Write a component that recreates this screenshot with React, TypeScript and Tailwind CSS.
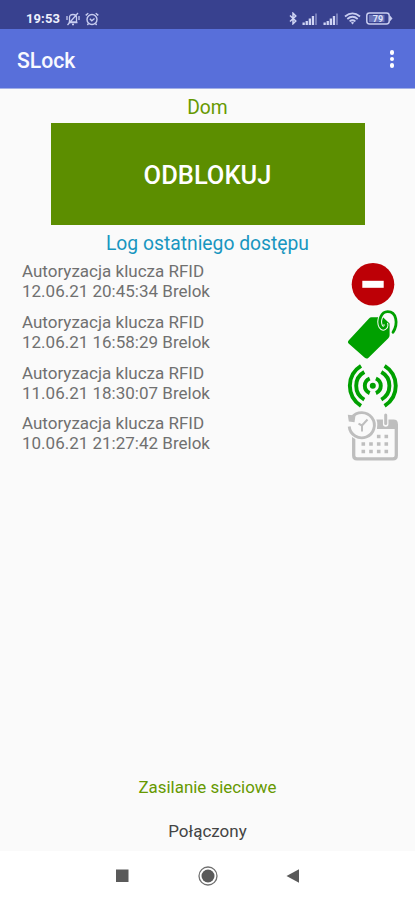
import React from 'react';

type LogEntry = {
  title: string;
  detail: string;
  icon: React.ReactNode;
};

function NoEntryIcon() {
  return (
    <svg className="h-[50px] w-[52px]" viewBox="0 0 52 50" aria-hidden="true">
      <circle cx="26" cy="25.3" r="21.3" fill="#bd0006" />
      <rect x="15.3" y="21.8" width="21.4" height="7" fill="#fff" />
    </svg>
  );
}

function TagIcon() {
  return (
    <svg className="h-[50px] w-[52px]" viewBox="0 0 52 50" aria-hidden="true">
      <path
        d="M24.500 7.300H36L42.600 13.500V25.300Q42.600 27 41.300 28.300L21.500 47.700Q19.700 49.400 17.800 47.800L1.900 33.700Q0 32 1.800 30.200L22 8.400Q23 7.300 24.500 7.300Z"
        fill="#00a000"
      />
      <path
        d="M38.700 13.500C40 17.500 36 20 33.800 16.500 31 11 34 1.700 40.700 1.700 49.500 1.700 51.500 13.500 46 22.300"
        fill="none"
        stroke="#fafafa"
        strokeWidth="4.800"
      />
      <path
        d="M38.700 13.500C40 17.500 36 20 33.800 16.500 31 11 34 1.700 40.700 1.700 49.500 1.700 51.500 13.500 46 22.300"
        fill="none"
        stroke="#00a000"
        strokeWidth="2.800"
        strokeLinecap="round"
      />
    </svg>
  );
}

function SignalIcon() {
  return (
    <svg className="h-[50px] w-[52px]" viewBox="0 0 52 50" aria-hidden="true">
      <circle cx="25.800" cy="24.800" r="3" fill="#00a000" />
      <g fill="none" stroke="#00a000" strokeWidth="3.900">
        <path d="M22.700 17.500A7.900 7.900 0 0 0 22.700 32.100M28.900 17.500A7.900 7.900 0 0 1 28.900 32.100" />
        <path d="M17.300 11A15.800 15.800 0 0 0 17.300 38.600M34.300 11A15.800 15.800 0 0 1 34.300 38.600" />
        <path d="M14 4.800A23.500 23.500 0 0 0 14 44.800M37.600 4.800A23.500 23.500 0 0 1 37.600 44.800" />
      </g>
    </svg>
  );
}

function ScheduleIcon() {
  return (
    <svg className="h-[50px] w-[52px]" viewBox="0 0 52 50" aria-hidden="true">
      <path
        d="M6.700 26V44.500Q6.700 47.800 10 47.800H46Q49.300 47.800 49.300 44.500V13"
        fill="none"
        stroke="#bebebe"
        strokeWidth="3.300"
      />
      <path d="M28 8.400H46.500Q50.900 8.400 50.900 12.700V18H30Z" fill="#bebebe" />
      <path d="M38.700 3V13" stroke="#fafafa" strokeWidth="5.500" strokeLinecap="round" />
      <path d="M38.700 4V12.500" stroke="#bebebe" strokeWidth="3" strokeLinecap="round" />
      <circle cx="14.700" cy="13.800" r="15.600" fill="#fafafa" />
      <path d="M4.800 6.500A12.600 12.600 0 1 1 2.200 15.500" fill="none" stroke="#bebebe" strokeWidth="2.900" />
      <path d="M.8 3.800 8.500 4.500 7.500 11.300 1.800 10.500Z" fill="#bebebe" />
      <path d="M20.500 8.500 15 14.500V20.500M11.500 12.700 15 14.500" fill="none" stroke="#bebebe" strokeWidth="2" />
      <g fill="#bebebe">
        <path d="M29.900 23.700h3.600v3.600h-3.600zM37.500 23.700h3.600v3.600h-3.600z" />
        <path d="M14.500 31.200h3.600v3.600h-3.600zM22.200 31.200h3.600v3.600h-3.600zM29.900 31.200h3.600v3.600h-3.600zM37.500 31.200h3.600v3.600h-3.600z" />
        <path d="M14.500 38.700h3.600v3.600h-3.600zM22.200 38.700h3.600v3.600h-3.600zM29.900 38.700h3.600v3.600h-3.600zM37.500 38.700h3.600v3.600h-3.600z" />
      </g>
    </svg>
  );
}

function MutedIcon() {
  return (
    <svg className="h-[14px] w-[14px]" viewBox="0 0 14 14" fill="none" stroke="#c8cdf0" strokeWidth="1.300" aria-hidden="true">
      <path d="M3.500 10V5.500Q3.500 2.500 7 2.500T10.500 5.500V10ZM2.500 10.500H11.500M6 12.500H8M12 1 1.500 13M1 4V8M13 4V8" />
    </svg>
  );
}

function AlarmIcon() {
  return (
    <svg className="h-[14px] w-[14px]" viewBox="0 0 14 14" fill="none" stroke="#c8cdf0" strokeWidth="1.400" aria-hidden="true">
      <circle cx="7" cy="7.500" r="5" />
      <path d="M.7 3.400 3.300 1.200M13.300 3.400 10.700 1.200M4.800 6.700 6.800 8.700 9.500 6.500M3.500 11.500 2.400 13M10.500 11.500 11.600 13" />
    </svg>
  );
}

function BluetoothIcon() {
  return (
    <svg className="h-[13px] w-[8px]" viewBox="0 0 8 13" fill="none" stroke="#d0d5f4" strokeWidth="1.500" aria-hidden="true">
      <path d="M1 3.500 6.800 9 4 11.800V1.200L6.800 4 1 9.500" />
    </svg>
  );
}

function CellIcon() {
  return (
    <svg className="h-[12px] w-[16px]" viewBox="0 0 16 12" fill="#d0d5f4" aria-hidden="true">
      <path d="M.5 9.500h2.300V12H.5zM3.600 8h2.300v4H3.600zM6.700 5.500H9V12H6.700zM9.800 3h2.300v9H9.800z" />
      <path d="M13 .5h2V12h-2z" opacity=".4" />
    </svg>
  );
}

function WifiIcon() {
  return (
    <svg className="h-[13px] w-[17px]" viewBox="0 0 17 13" fill="none" stroke="#c8cdf0" strokeWidth="1.800" aria-hidden="true">
      <path d="M1 4.500Q8.500-1.800 16 4.500M3.300 7Q8.500 2.600 13.700 7M5.600 9.400Q8.500 7 11.400 9.400" />
      <path d="M8.500 12.500 6.800 10.600Q8.500 9.400 10.200 10.600Z" fill="#c8cdf0" stroke="none" />
    </svg>
  );
}

function BatteryIcon() {
  return (
    <svg className="h-[13px] w-[27px]" viewBox="0 0 27 13" aria-hidden="true">
      <rect x=".8" y=".9" width="22.400" height="11" rx="2.700" fill="none" stroke="#c8cdf0" strokeWidth="1.500" />
      <path d="M24 3.500 26.500 6.400 24 9.300Z" fill="#c8cdf0" />
      <rect x="3" y="3" width="15.500" height="7" fill="#6973b8" />
      <text x="12" y="9.700" textAnchor="middle" fontFamily="Roboto, sans-serif" fontSize="9" fontWeight="700" fill="#dfe3fa">
        79
      </text>
    </svg>
  );
}

const entries: LogEntry[] = [
  { title: 'Autoryzacja klucza RFID', detail: '12.06.21 20:45:34 Brelok', icon: <NoEntryIcon /> },
  { title: 'Autoryzacja klucza RFID', detail: '12.06.21 16:58:29 Brelok', icon: <TagIcon /> },
  { title: 'Autoryzacja klucza RFID', detail: '11.06.21 18:30:07 Brelok', icon: <SignalIcon /> },
  { title: 'Autoryzacja klucza RFID', detail: '10.06.21 21:27:42 Brelok', icon: <ScheduleIcon /> },
];

function StatusBar() {
  return (
    <div className="flex h-[29px] shrink-0 items-center bg-[#38418f] pt-[9px] pr-[22px] pb-[1px] pl-[26px]">
      <span className="text-[13px] leading-none font-bold tracking-[0.1px] text-[#eef0fc]">19:53</span>
      <div className="ml-[6px] flex gap-[5px]">
        <MutedIcon />
        <AlarmIcon />
      </div>
      <div className="ml-auto flex items-center">
        <BluetoothIcon />
        <div className="ml-[5px] flex gap-[5px]">
          <CellIcon />
          <CellIcon />
        </div>
        <div className="ml-[5px] flex gap-[5px]">
          <WifiIcon />
          <BatteryIcon />
        </div>
      </div>
    </div>
  );
}

function AppBar() {
  return (
    <header className="flex h-[60px] shrink-0 items-center justify-between border-b border-[#a2afe6] bg-[#586fda] pr-[21px] pl-[17px]">
      <h1 className="pt-[5px] text-[21.2px] leading-none font-medium text-[#f8f9ff]">SLock</h1>
      <button type="button" aria-label="Menu" className="mt-px flex flex-col gap-[2px]">
        <span className="h-[4.5px] w-[4.5px] rounded-full bg-white" />
        <span className="h-[4.5px] w-[4.5px] rounded-full bg-white" />
        <span className="h-[4.5px] w-[4.5px] rounded-full bg-white" />
      </button>
    </header>
  );
}

function NavBar() {
  return (
    <nav className="flex h-[49px] shrink-0 items-center justify-center gap-[67px] bg-white">
      <svg className="h-[20px] w-[18px]" viewBox="0 0 18 20" aria-hidden="true">
        <rect x="3" y="3.500" width="12.500" height="12.500" fill="#5a5a5a" />
      </svg>
      <svg className="h-[20px] w-[20px]" viewBox="0 0 20 20" aria-hidden="true">
        <circle cx="10" cy="10" r="9" fill="none" stroke="#707070" strokeWidth="1.300" />
        <circle cx="10" cy="10" r="6.500" fill="#5a5a5a" />
      </svg>
      <svg className="h-[20px] w-[18px]" viewBox="0 0 18 20" aria-hidden="true">
        <path d="M1.500 10 14 3.200V16.700Z" fill="#5a5a5a" />
      </svg>
    </nav>
  );
}

export default function App() {
  return (
    <div className="flex h-[900px] w-[415px] flex-col overflow-hidden bg-[#fafafa] font-['Roboto',sans-serif]">
      <StatusBar />
      <AppBar />
      <main className="flex flex-1 flex-col">
        <h2 className="mt-[8px] text-center text-[19.3px] leading-[22px] text-[#669900]">Dom</h2>
        <button
          type="button"
          className="mx-auto mt-[4px] h-[102px] w-[314px] shrink-0 bg-[#5c8e00] pt-[2px] text-[25.5px] font-medium text-white"
        >
          ODBLOKUJ
        </button>
        <h3 className="mt-[8px] text-center text-[19.3px] leading-[22px] text-[#1896c0]">Log ostatniego dostępu</h3>
        <ul className="mt-[4px]">
          {entries.map((entry) => (
            <li key={entry.detail} className="flex h-[50.75px] justify-between pr-[16px] pl-[22px]">
              <div className="pt-[2px] text-[17px] leading-[20px] text-[#707070]">
                <p>{entry.title}</p>
                <p>{entry.detail}</p>
              </div>
              {entry.icon}
            </li>
          ))}
        </ul>
        <p className="mt-auto text-center text-[16.9px] leading-[20px] text-[#669900]">Zasilanie sieciowe</p>
        <p className="mt-[24px] mb-[10px] text-center text-[17px] leading-[20px] text-[#444]">Połączony</p>
      </main>
      <NavBar />
    </div>
  );
}
